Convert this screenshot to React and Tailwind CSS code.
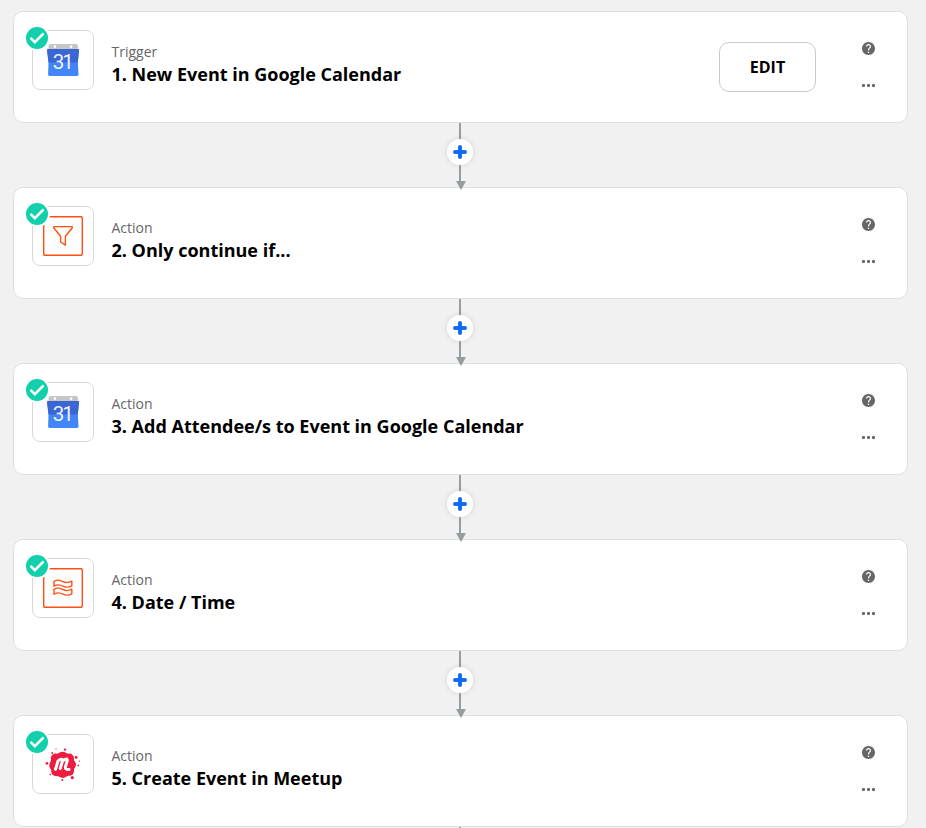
import React from 'react';

function CalendarLogo() {
  return (
    <svg width="32" height="32" viewBox="0 0 32 32">
      <path d="M1.5 6V2Q1.5 0 3.5 0H29Q31 0 31 2V6Z" fill="#c6c6c6" />
      <circle cx="8" cy="2.6" r="1.3" fill="#fff" />
      <circle cx="24" cy="2.6" r="1.3" fill="#fff" />
      <path d="M1 5H31Q32.2 5 32 6.5L30.8 18.5L31.5 30Q31.6 32 30 32H2.5Q1 32 1.1 30L1.5 18.5L0.1 6.5Q0 5 1 5Z" fill="#4285f4" />
      <path d="M1 5H31Q32.2 5 32 6.5L30.8 18.5H1.5L0.1 6.5Q0 5 1 5Z" fill="#3a66d3" />
      <text x="16.3" y="25.4" textAnchor="middle" fill="#edf3fd" fontSize="20.5" fontWeight="400" fontFamily="Roboto, sans-serif" textLength="21">31</text>
    </svg>
  );
}

function FilterLogo() {
  return (
    <svg width="40" height="40" viewBox="0 0 40 40" fill="none" stroke="#ff4f12" strokeWidth="1.4">
      <rect x="0.7" y="0.7" width="38.6" height="38.6" rx="1" />
      <path d="M10.8 10.6H29.2V12L22.4 20.3V29.2L17.6 26V20.3L10.8 12Z" strokeLinejoin="round" />
    </svg>
  );
}

function DateLogo() {
  return (
    <svg width="40" height="40" viewBox="0 0 40 40" fill="none" stroke="#ff4f12" strokeWidth="1.4" strokeLinejoin="round">
      <rect x="0.7" y="0.7" width="38.6" height="38.6" rx="1" />
      <path d="M11 13.4C15 11.2 17 12.2 20 13.7C23 15.2 25 15.2 28.8 13.2V17.8C25 19.9 23 19.6 20 18.2C17 16.8 15 16 11 18.2Z" />
      <path d="M11 21.4C15 19.2 17 20.2 20 21.7C23 23.2 25 23.2 28.8 21.2V25.8C25 27.9 23 27.6 20 26.2C17 24.8 15 24 11 26.2Z" />
    </svg>
  );
}

function MeetupLogo() {
  return (
    <svg width="36" height="36" viewBox="0 0 36 36" fill="#ed1c40">
      <circle cx="17.5" cy="18.8" r="12.4" />
      <circle cx="10.6" cy="12.4" r="4.8" />
      <circle cx="17.5" cy="10.5" r="4.8" />
      <circle cx="24.2" cy="12.4" r="4.8" />
      <circle cx="26.2" cy="18.6" r="4.8" />
      <circle cx="24.2" cy="25" r="4.8" />
      <circle cx="17.8" cy="27.2" r="4.8" />
      <circle cx="11" cy="25.4" r="4.8" />
      <circle cx="8.8" cy="19.4" r="4.6" />
      <circle cx="7.2" cy="7" r="0.9" />
      <circle cx="11" cy="2.9" r="0.6" />
      <circle cx="20" cy="3.6" r="1.2" />
      <circle cx="31.2" cy="11.4" r="1.4" />
      <circle cx="34.4" cy="15.2" r="0.6" />
      <circle cx="33.3" cy="19.4" r="0.9" />
      <circle cx="27.3" cy="31.6" r="1.6" />
      <circle cx="17.3" cy="33.9" r="1" />
      <circle cx="2" cy="17.3" r="1.4" />
      <circle cx="5.2" cy="28.6" r="0.8" />
      <path
        d="M10.5 23.2L13.1 14.8Q17.1 11.6 17.6 14.6L15.2 22.6M17.6 14.8Q22.9 11.2 22.2 14.9L20.5 20.6Q19.7 23.8 24 23.4"
        fill="none" stroke="#fff" strokeWidth="3" strokeLinecap="round" strokeLinejoin="round"
      />
    </svg>
  );
}

function CheckBadge() {
  return (
    <svg className="absolute -top-[6px] -left-[9px]" width="26" height="26" viewBox="0 0 26 26">
      <circle cx="13" cy="13" r="13" fill="#fff" />
      <circle cx="13" cy="13" r="11" fill="#13d0ac" />
      <path d="M6.5 12.9L10.8 17.2L19.6 8.3" fill="none" stroke="#fff" strokeWidth="2.6" />
    </svg>
  );
}

function HelpIcon() {
  return (
    <svg width="13" height="13" viewBox="2 2 20 20" fill="#666">
      <path d="M12 2C6.48 2 2 6.48 2 12s4.48 10 10 10 10-4.48 10-10S17.52 2 12 2zm1 17h-2v-2h2v2zm2.07-7.75l-.9.92C13.45 12.9 13 13.5 13 15h-2v-.5c0-1.1.45-2.1 1.17-2.83l1.24-1.26c.37-.36.59-.86.59-1.41 0-1.1-.9-2-2-2s-2 .9-2 2H8c0-2.21 1.79-4 4-4s4 1.79 4 4c0 .88-.36 1.68-.93 2.25z" stroke="#666" strokeWidth="0" />
    </svg>
  );
}

function MoreIcon() {
  return (
    <svg width="13" height="3" viewBox="0 0 13 3" fill="#666">
      <rect width="3" height="3" rx="1" />
      <rect x="5" width="3" height="3" rx="1" />
      <rect x="10" width="3" height="3" rx="1" />
    </svg>
  );
}

function StepCard({ kind, title, logo, editable }) {
  return (
    <section className="flex h-28 shrink-0 rounded-[10px] border border-[#dddfe0] bg-white pt-[18px] pr-8 pl-[18px]">
      <div className="relative flex h-[60px] w-[62px] shrink-0 items-center justify-center rounded-lg border border-[#d7d8d9]">
        {logo}
        <CheckBadge />
      </div>
      <div className="ml-[17.5px] flex-1 pt-3">
        <p className="text-sm leading-5 text-[#666]">{kind}</p>
        <h2 className="text-lg leading-6 font-bold text-black">{title}</h2>
      </div>
      {editable && (
        <button className="mt-3 mr-[46px] h-[50px] w-[97px] rounded-[10px] border border-[#c9cacb] text-base font-bold text-black">
          EDIT
        </button>
      )}
      <div className="flex flex-col items-center pt-3">
        <HelpIcon />
        <div className="mt-[29px]"><MoreIcon /></div>
      </div>
    </section>
  );
}

function Connector() {
  return (
    <div className="relative z-10 -mb-[3px] flex h-[67px] w-[894px] shrink-0 flex-col items-center">
      <div className="h-4 w-0.5 bg-[#969da1]" />
      <div className="flex size-[26px] items-center justify-center rounded-full bg-white shadow-[0_0_6px_rgba(0,0,0,0.12)]">
        <svg width="14" height="14" viewBox="0 0 14 14" stroke="#136bf5" strokeWidth="4" strokeLinecap="round">
          <path d="M7 2V12M2 7H12" />
        </svg>
      </div>
      <div className="h-4 w-0.5 bg-[#969da1]" />
      <svg className="ml-[2px]" width="10" height="9" viewBox="0 0 10 9" fill="#969da1">
        <path d="M0 0H10L5 9Z" />
      </svg>
    </div>
  );
}

const steps = [
  { kind: 'Trigger', title: '1. New Event in Google Calendar', logo: <CalendarLogo />, editable: true },
  { kind: 'Action', title: '2. Only continue if...', logo: <FilterLogo /> },
  { kind: 'Action', title: '3. Add Attendee/s to Event in Google Calendar', logo: <CalendarLogo /> },
  { kind: 'Action', title: '4. Date / Time', logo: <DateLogo /> },
  { kind: 'Action', title: '5. Create Event in Meetup', logo: <MeetupLogo /> },
];

export default function App() {
  return (
    <main className="flex h-[828px] flex-col overflow-hidden bg-[#f1f1f1] pt-[11px] pr-[18px] pl-[13px] font-['Open_Sans',sans-serif]">
      {steps.map((step) => (
        <React.Fragment key={step.title}>
          <StepCard {...step} />
          <Connector />
        </React.Fragment>
      ))}
    </main>
  );
}
